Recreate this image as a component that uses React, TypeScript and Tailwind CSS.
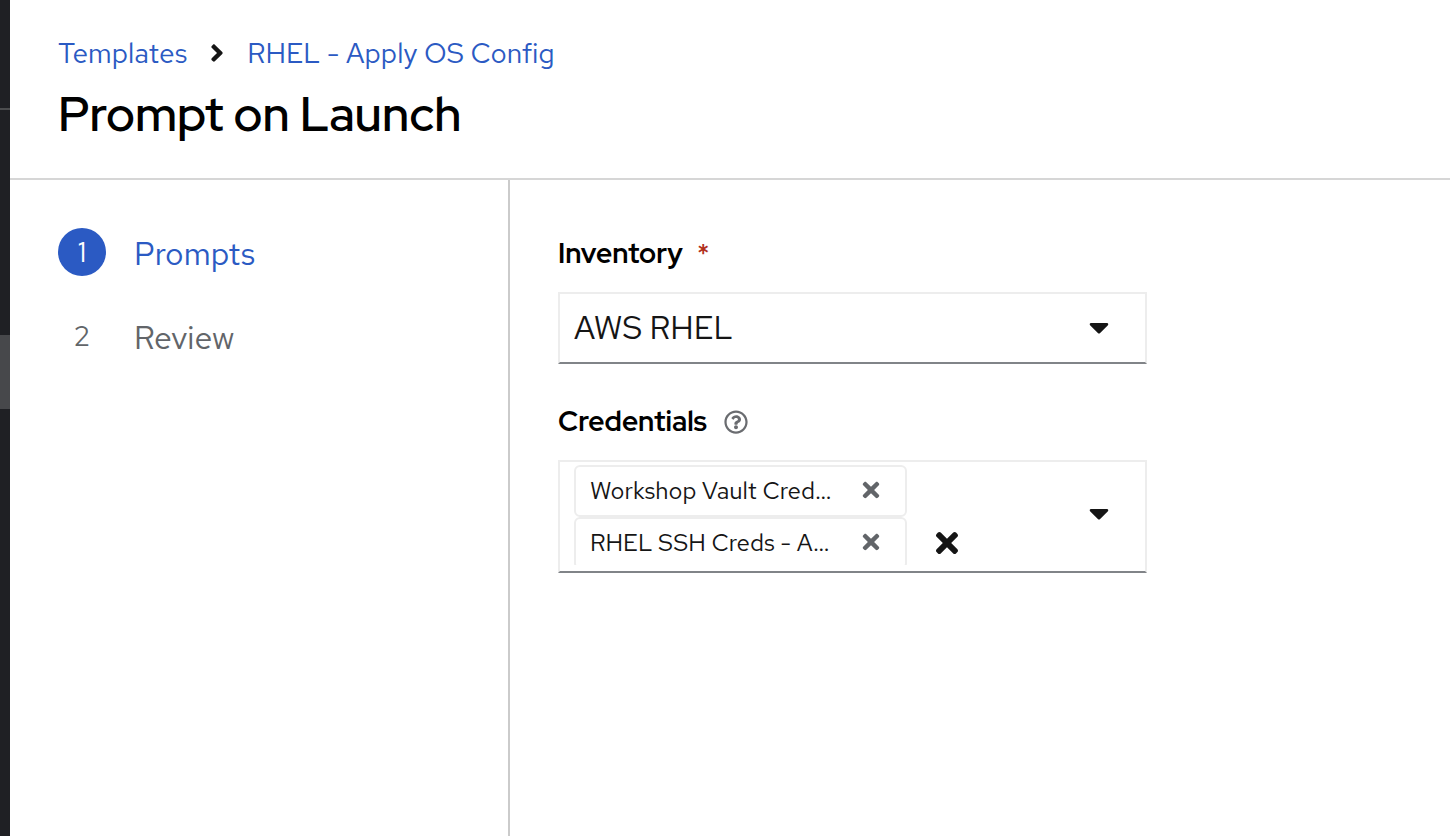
import { useState } from 'react';
import { FaAngleRight, FaCaretDown, FaRegQuestionCircle, FaTimes } from 'react-icons/fa';

const credentialOptions = ['Workshop Vault Cred…', 'RHEL SSH Creds - A…'];

const steps = [
  { number: 1, name: 'Prompts' },
  { number: 2, name: 'Review' },
];

function NavigationEdge() {
  return (
    <aside className="flex w-2.5 shrink-0 flex-col bg-[#1f2024]">
      <div className="mt-[108px] h-0.5 bg-[#4c4d4f]" />
      <div className="mt-[225px] h-[74px] bg-[#47484b]" />
    </aside>
  );
}

function PageHeader() {
  return (
    <header className="border-b-2 border-[#d6d6d6] px-12 pt-8 pb-8">
      <nav aria-label="Breadcrumb">
        <ol className="flex items-center gap-[23px] text-[28px] leading-[42px] text-[#2b5ac3]">
          <li>
            <a href="#templates">Templates</a>
          </li>
          <li className="flex items-center gap-[23px]">
            <FaAngleRight aria-hidden="true" className="h-7 w-3.5 text-[#151515]" />
            <a href="#template">RHEL - Apply OS Config</a>
          </li>
        </ol>
      </nav>
      <h1 className="mt-2 font-['Red_Hat_Display','Red_Hat_Text','Inter',sans-serif] text-[48px] leading-[64px] font-semibold text-black">
        Prompt on Launch
      </h1>
    </header>
  );
}

function WizardSteps({ current, onSelect }: { current: number; onSelect: (step: number) => void }) {
  return (
    <nav aria-label="Wizard steps" className="w-[500px] shrink-0 border-r-2 border-[#cbcbcb] px-12 py-12">
      <ol className="flex flex-col gap-9">
        {steps.map((step) => {
          const active = step.number === current;
          return (
            <li key={step.number}>
              <button
                type="button"
                aria-current={active ? 'step' : undefined}
                onClick={() => onSelect(step.number)}
                className={active ? 'flex items-center gap-7 text-[#2b5ac3]' : 'flex items-center gap-7 text-[#626569]'}
              >
                <span
                  className={
                    active
                      ? 'flex size-12 items-center justify-center rounded-full bg-[#2b5ac3] text-[28px] text-white'
                      : 'flex size-12 items-center justify-center rounded-full text-[28px]'
                  }
                >
                  {step.number}
                </span>
                <span className="pt-1 text-[32px] leading-[44px]">{step.name}</span>
              </button>
            </li>
          );
        })}
      </ol>
    </nav>
  );
}

function CredentialChip({ name, onRemove }: { name: string; onRemove: () => void }) {
  return (
    <li className="flex h-[52px] shrink-0 items-center justify-between rounded-md border-2 border-[#ededed] pr-[25px] pl-3.5">
      <span className="text-[24px] leading-9 whitespace-nowrap">{name}</span>
      <button type="button" aria-label={`Remove ${name}`} onClick={onRemove} className="pb-0.5">
        <FaTimes aria-hidden="true" className="h-6 w-[18px] text-[#626569]" />
      </button>
    </li>
  );
}

export default function App() {
  const [step, setStep] = useState(1);
  const [inventory, setInventory] = useState('AWS RHEL');
  const [credentials, setCredentials] = useState(credentialOptions);

  return (
    <div className="flex min-h-screen bg-white font-['Red_Hat_Text','Inter',sans-serif] text-[#151515]">
      <NavigationEdge />
      <div className="flex min-w-0 flex-1 flex-col">
        <PageHeader />
        <div className="flex flex-1">
          <WizardSteps current={step} onSelect={setStep} />
          <main className="min-w-0 flex-1 p-12">
            <form className="flex w-full max-w-[589px] flex-col gap-8">
              <div className="flex flex-col gap-3.5">
                <label
                  htmlFor="inventory"
                  className="flex items-center gap-3.5 font-['Red_Hat_Display','Red_Hat_Text','Inter',sans-serif] text-[28px] leading-[50px] font-bold text-black"
                >
                  Inventory
                  <span aria-hidden="true" className="font-['Red_Hat_Text','Inter',sans-serif] font-medium text-[#b1311d]">
                    *
                  </span>
                </label>
                <div className="grid items-center border-2 border-[#ededed] border-b-[#818488]">
                  <select
                    id="inventory"
                    required
                    value={inventory}
                    onChange={(event) => setInventory(event.target.value)}
                    className="col-start-1 row-start-1 h-[68px] w-full appearance-none bg-transparent px-3.5 text-[32px]"
                  >
                    <option>AWS RHEL</option>
                  </select>
                  <FaCaretDown
                    aria-hidden="true"
                    className="pointer-events-none col-start-1 row-start-1 mr-9 mb-0.5 h-8 w-5 justify-self-end"
                  />
                </div>
              </div>

              <div className="flex flex-col gap-3.5">
                <div className="flex items-center gap-[17px]">
                  <span
                    id="credentials-label"
                    className="font-['Red_Hat_Display','Red_Hat_Text','Inter',sans-serif] text-[28px] leading-[50px] font-bold text-black"
                  >
                    Credentials
                  </span>
                  <button type="button" aria-label="More info for credentials" className="pt-0.5">
                    <FaRegQuestionCircle aria-hidden="true" className="size-6 text-[#6a6c70]" />
                  </button>
                </div>
                <div
                  role="group"
                  aria-labelledby="credentials-label"
                  className="flex h-[113px] items-start border-2 border-[#ededed] border-b-[#818488] pt-[3px] pr-9 pl-3.5"
                >
                  <ul className="flex h-[100px] w-[333px] flex-col overflow-hidden">
                    {credentials.map((name) => (
                      <CredentialChip
                        key={name}
                        name={name}
                        onRemove={() => setCredentials(credentials.filter((item) => item !== name))}
                      />
                    ))}
                  </ul>
                  <button
                    type="button"
                    aria-label="Clear all credentials"
                    onClick={() => setCredentials([])}
                    className="ml-7 self-end pb-3"
                  >
                    <FaTimes aria-hidden="true" className="h-8 w-6" />
                  </button>
                  <button
                    type="button"
                    aria-label="Show credentials"
                    onClick={() => setCredentials(credentialOptions)}
                    className="ml-auto self-center pb-2.5"
                  >
                    <FaCaretDown aria-hidden="true" className="h-8 w-5" />
                  </button>
                </div>
              </div>
            </form>
          </main>
        </div>
      </div>
    </div>
  );
}
